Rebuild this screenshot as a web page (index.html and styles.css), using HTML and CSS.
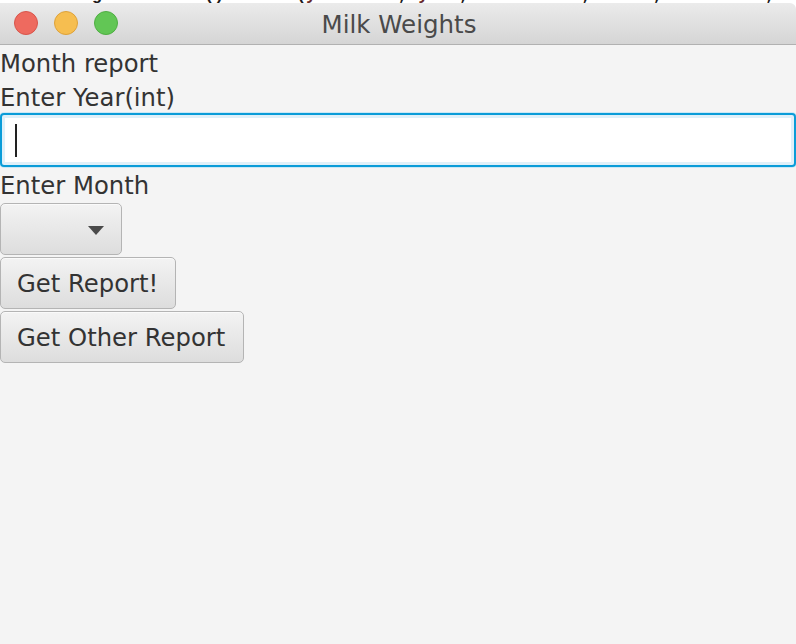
FILE: index.html
```html
<!DOCTYPE html>
<html>
<head>
<meta charset="utf-8">
<link rel="stylesheet" href="styles.css">
</head>
<body>
<div class="behind"><div class="code"><span class="k">dataList</span>.<span class="k">getChildren</span>().<span class="k">addAll</span>(<span class="v">yearLabel</span>, <span class="v">year</span>, <span class="v">monthLabel</span>, <span class="v">month</span>, <span class="v">dateLabel</span>, <span class="v">date</span></div></div>
<div class="window">
  <div class="titlebar">
    <div class="lights">
      <span class="light red"></span>
      <span class="light yellow"></span>
      <span class="light green"></span>
    </div>
    <div class="title">Milk Weights</div>
    <div></div>
  </div>
  <div class="content">
    <div class="label">Month report</div>
    <div class="label">Enter Year(int)</div>
    <div class="field"><span class="caret"></span></div>
    <div class="label">Enter Month</div>
    <div class="btn combo"><span class="arrow"></span></div>
    <div class="btn report">Get Report!</div>
    <div class="btn other">Get Other Report</div>
  </div>
</div>
</body>
</html>
```
FILE: styles.css
```css
html, body {
  margin: 0;
  padding: 0;
  background: #ffffff;
  overflow: hidden;
}
body {
  width: 796px;
  height: 644px;
}
.behind {
  height: 3px;
  overflow: hidden;
}
.code {
  margin-top: -11px;
  font-family: "Liberation Mono", monospace;
  font-size: 17px;
  font-weight: bold;
  line-height: 14px;
  color: #1a1a1a;
  white-space: nowrap;
}
.code .v { color: #6a2a2a; }
.window {
  height: 641px;
  background: #f4f4f4;
  border-top-right-radius: 6px;
  overflow: hidden;
  font-family: "DejaVu Sans", "Liberation Sans", sans-serif;
}
.titlebar {
  height: 41px;
  border-bottom: 1px solid #b1b1b1;
  background: linear-gradient(#ebebeb, #d5d5d5);
  display: grid;
  grid-template-columns: 1fr auto 1fr;
  align-items: center;
  border-top-right-radius: 6px;
}
.lights {
  display: flex;
  gap: 16px;
  padding-left: 14px;
  align-items: center;
  margin-top: -1px;
}
.light {
  width: 24px;
  height: 24px;
  border-radius: 50%;
  box-sizing: border-box;
}
.red { background: #ee6a5f; border: 1px solid #d8554b; }
.yellow { background: #f6be50; border: 1px solid #dea23a; }
.green { background: #62c655; border: 1px solid #4fae43; }
.title {
  font-size: 24.5px;
  color: #4a4a4a;
  padding-left: 2px;
  margin-top: 2px;
}
.content {
  display: flex;
  flex-direction: column;
  align-items: flex-start;
  color: #333333;
  font-size: 24.3px;
}
.label {
  height: 34px;
  box-sizing: border-box;
  padding-top: 3px;
  line-height: 31px;
}
.field {
  align-self: stretch;
  height: 54px;
  box-sizing: border-box;
  border: 2px solid #0a9cd8;
  border-radius: 4px;
  background: #ffffff;
  box-shadow: inset 0 3px 0 #dff0f9, inset 3px 0 0 #dff0f9, inset -3px 0 0 #dff0f9, inset 0 -3px 0 #dff0f9, 0 0 0 1px #cbe8f5;
  display: flex;
  align-items: center;
  padding-left: 13px;
}
.caret {
  width: 2px;
  height: 33px;
  background: #222222;
}
.btn {
  margin-top: 2px;
  height: 52px;
  box-sizing: border-box;
  border: 1px solid #b4b4b4;
  border-radius: 5px;
  background: linear-gradient(#f3f3f3, #dddddd);
  box-shadow: inset 0 1px 0 #fafafa;
  display: flex;
  align-items: center;
  padding-left: 16px;
  padding-top: 1px;
  white-space: nowrap;
}
.combo {
  width: 122px;
  justify-content: flex-end;
  padding-right: 17px;
  padding-left: 0;
  padding-top: 0;
}
.arrow {
  width: 0;
  height: 0;
  border-left: 8.5px solid transparent;
  border-right: 8.5px solid transparent;
  border-top: 9px solid #4a4a4a;
  margin-top: 3px;
}
.report { width: 176px; }
.other { width: 244px; }
```
